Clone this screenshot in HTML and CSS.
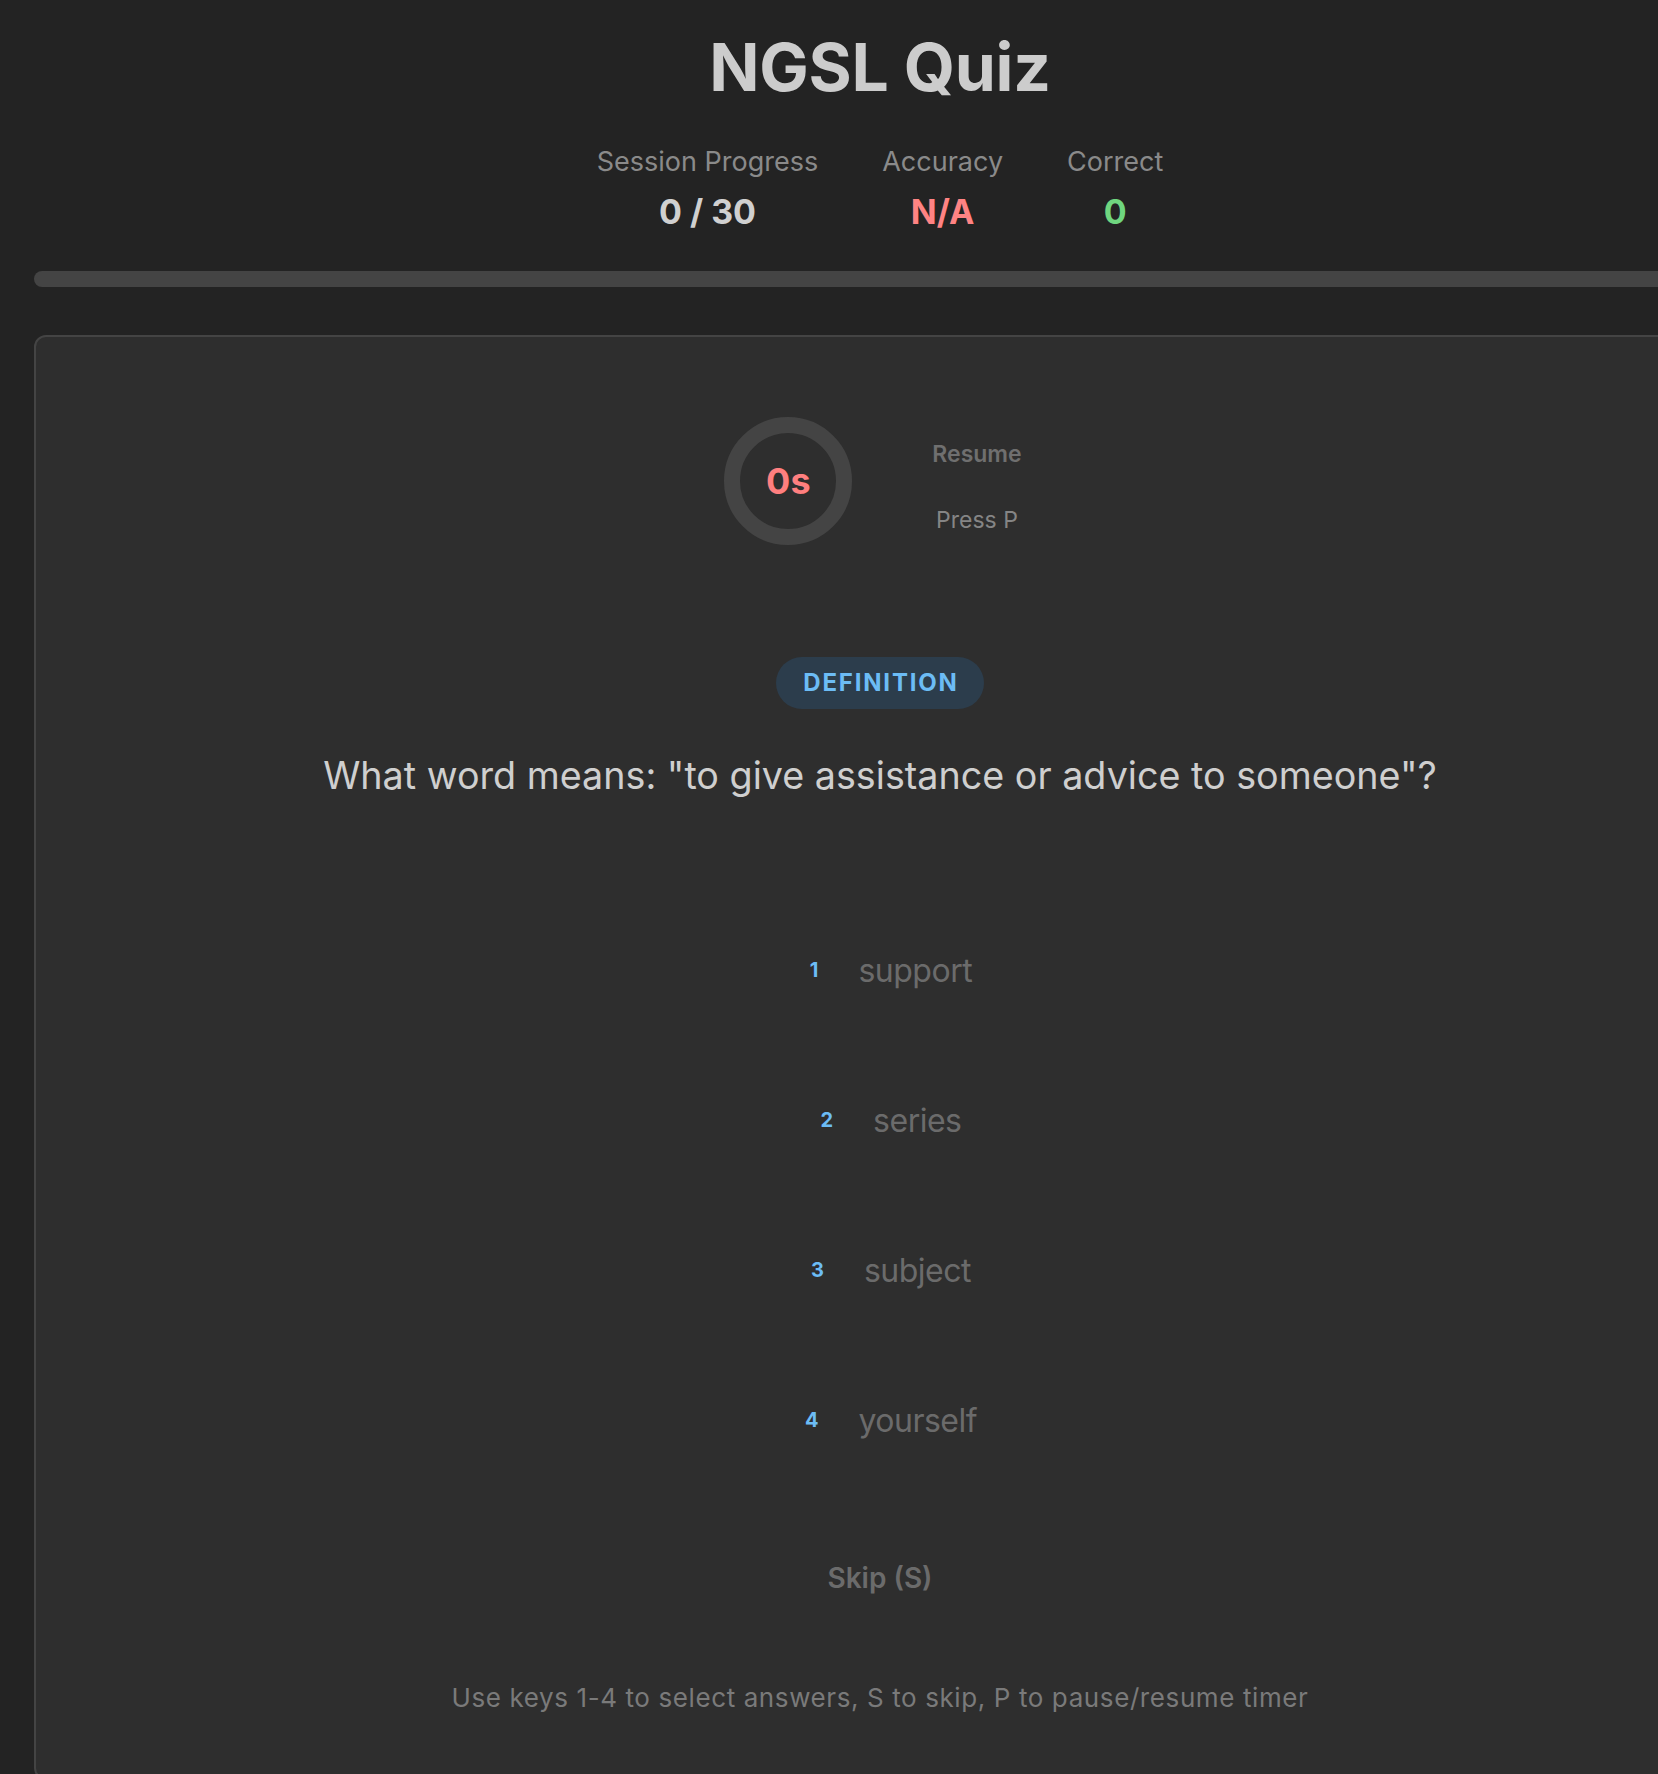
FILE: index.html
```html
<!DOCTYPE html>
<html lang="en">
<head>
<meta charset="utf-8">
<title>NGSL Quiz</title>
<link rel="stylesheet" href="styles.css">
</head>
<body>
<div class="app">
  <header class="header">
    <h1 class="title">NGSL Quiz</h1>
    <div class="stats">
      <div class="stat">
        <div class="stat-label">Session Progress</div>
        <div class="stat-value">0 / 30</div>
      </div>
      <div class="stat">
        <div class="stat-label">Accuracy</div>
        <div class="stat-value stat-value--bad">N/A</div>
      </div>
      <div class="stat">
        <div class="stat-label">Correct</div>
        <div class="stat-value stat-value--good">0</div>
      </div>
    </div>
  </header>
  <div class="progress"><div class="progress-fill" style="width:0%"></div></div>

  <main class="card">
    <div class="timer-row">
      <div class="timer"><span class="timer-text">0s</span></div>
      <div class="timer-controls">
        <button class="resume-btn">Resume</button>
        <div class="press-hint">Press P</div>
      </div>
    </div>

    <div class="badge-wrap"><span class="badge">DEFINITION</span></div>
    <h2 class="question">What word means: "to give assistance or advice to someone"?</h2>

    <div class="options">
      <button class="option"><span class="option-num">1</span><span class="option-text">support</span></button>
      <button class="option"><span class="option-num">2</span><span class="option-text">series</span></button>
      <button class="option"><span class="option-num">3</span><span class="option-text">subject</span></button>
      <button class="option"><span class="option-num">4</span><span class="option-text">yourself</span></button>
    </div>

    <div class="skip-wrap"><button class="skip-btn">Skip (S)</button></div>

    <p class="hint">Use keys 1-4 to select answers, S to skip, P to pause/resume timer</p>
  </main>
</div>
</body>
</html>
```

FILE: styles.css
```css
* { box-sizing: border-box; }

html, body {
  margin: 0;
  padding: 0;
  background: #232323;
}

body {
  font-family: Inter, "Noto Sans", "Liberation Sans", sans-serif;
  color: #cccccc;
  padding: 0 34px;
}

.app {
  width: 1692px;
}

.header {
  display: flex;
  flex-direction: column;
  align-items: center;
}

.title {
  margin: 27px 0 0;
  font-size: 66px;
  line-height: 80px;
  font-weight: 700;
  color: #cccccc;
  letter-spacing: -0.3px;
}

.stats {
  display: flex;
  gap: 64px;
  margin-top: 39px;
}

.stat {
  display: flex;
  flex-direction: column;
  align-items: center;
}

.stat-label {
  font-size: 27px;
  line-height: 32px;
  color: #8a8a8a;
}

.stat-value {
  margin-top: 13px;
  font-size: 34px;
  line-height: 42px;
  font-weight: 700;
  color: #d0d0d0;
}

.stat-value--bad { color: #ff8383; }
.stat-value--good { color: #6fd67f; }

.progress {
  margin-top: 38px;
  height: 16px;
  border-radius: 8px;
  background: #444444;
  overflow: hidden;
}

.progress-fill {
  height: 100%;
  background: #6cbcf5;
}

.card {
  margin-top: 48px;
  background: #2e2e2e;
  border: 2px solid #444444;
  border-radius: 12px;
  padding: 80px 0 64px;
  display: flex;
  flex-direction: column;
  align-items: center;
}

.timer-row {
  display: flex;
  align-items: center;
  gap: 66px;
}

.timer {
  width: 128px;
  height: 128px;
  border-radius: 50%;
  border: 16px solid #444444;
  display: flex;
  align-items: center;
  justify-content: center;
}

.timer-text {
  font-size: 36px;
  font-weight: 700;
  color: #ff7f7f;
}

.timer-controls {
  display: flex;
  flex-direction: column;
  align-items: center;
}

.resume-btn {
  font-family: inherit;
  font-size: 23px;
  line-height: 28px;
  font-weight: 600;
  color: #6f6f6f;
  background: transparent;
  border: none;
  padding: 12px 14px;
}

.press-hint {
  margin-top: 26px;
  font-size: 23px;
  line-height: 28px;
  color: #858585;
}

.badge-wrap {
  margin-top: 112px;
}

.badge {
  display: inline-block;
  background: #2c3d4c;
  color: #6cbcf5;
  font-size: 24px;
  line-height: 30px;
  font-weight: 700;
  letter-spacing: 1.8px;
  padding: 11px 25px 11px 27px;
  border-radius: 26px;
}

.question {
  margin: 42px 0 0;
  font-size: 37.7px;
  line-height: 48px;
  font-weight: 400;
  color: #cfcfcf;
  text-align: center;
}

.options {
  margin-top: 96px;
  display: flex;
  flex-direction: column;
  align-items: center;
}

.option {
  height: 150px;
  display: flex;
  align-items: center;
  justify-content: center;
  background: transparent;
  border: none;
  padding: 0 0 0 22px;
  font-family: inherit;
  cursor: pointer;
}

.option-num {
  font-size: 20px;
  font-weight: 700;
  color: #6cbcf5;
  margin-right: 40px;
}

.option-text {
  font-size: 32px;
  letter-spacing: -0.5px;
  color: #6b6b6b;
}

.skip-wrap {
  margin-top: 55px;
}

.skip-btn {
  font-family: inherit;
  font-size: 28px;
  line-height: 32px;
  font-weight: 600;
  color: #6b6b6b;
  background: transparent;
  border: none;
  padding: 12px 24px;
}

.hint {
  margin: 76px 0 0;
  font-size: 26px;
  line-height: 32px;
  letter-spacing: 0.6px;
  color: #7a7a7a;
  text-align: center;
}
```
